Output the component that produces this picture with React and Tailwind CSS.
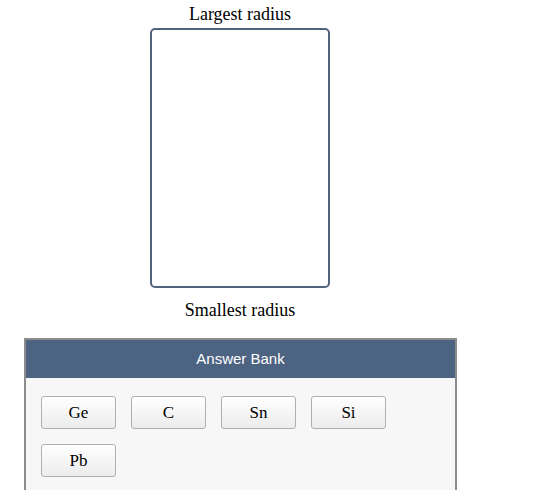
export default function App() {
  const serif = { fontFamily: '"Liberation Serif", "Times New Roman", serif' };
  const buttons = ["Ge", "C", "Sn", "Si", "Pb"];
  return (
    <div className="w-[546px] h-[490px] bg-white overflow-hidden" style={serif}>
      <div className="w-[480px] flex flex-col items-center">
        <div className="text-[18px] leading-[20px] text-black mt-[4px]">Largest radius</div>
        <div className="mt-[4px] w-[180px] h-[260px] border-2 border-[#52637d] rounded-[5px] bg-white"></div>
        <div className="mt-[12px] text-[18px] leading-[20px] text-black">Smallest radius</div>
      </div>
      <div className="ml-[24px] mt-[18px] w-[433px] h-[200px] border-2 border-[#8c8c8c] bg-[#f7f7f7]">
        <div
          className="h-[38px] bg-[#4d6382] text-white text-[15px] flex items-center justify-center"
          style={{ fontFamily: '"Liberation Sans", Arial, sans-serif' }}
        >
          Answer Bank
        </div>
        <div className="pl-[15px] pt-[18px] flex flex-wrap gap-[15px] w-[375px]">
          {buttons.map((b) => (
            <div
              key={b}
              className="w-[75px] h-[33px] border border-[#b0b0b0] rounded-[3px] bg-gradient-to-b from-white to-[#ececec] flex items-center justify-center text-[17px] text-black"
            >
              {b}
            </div>
          ))}
        </div>
      </div>
    </div>
  );
}
